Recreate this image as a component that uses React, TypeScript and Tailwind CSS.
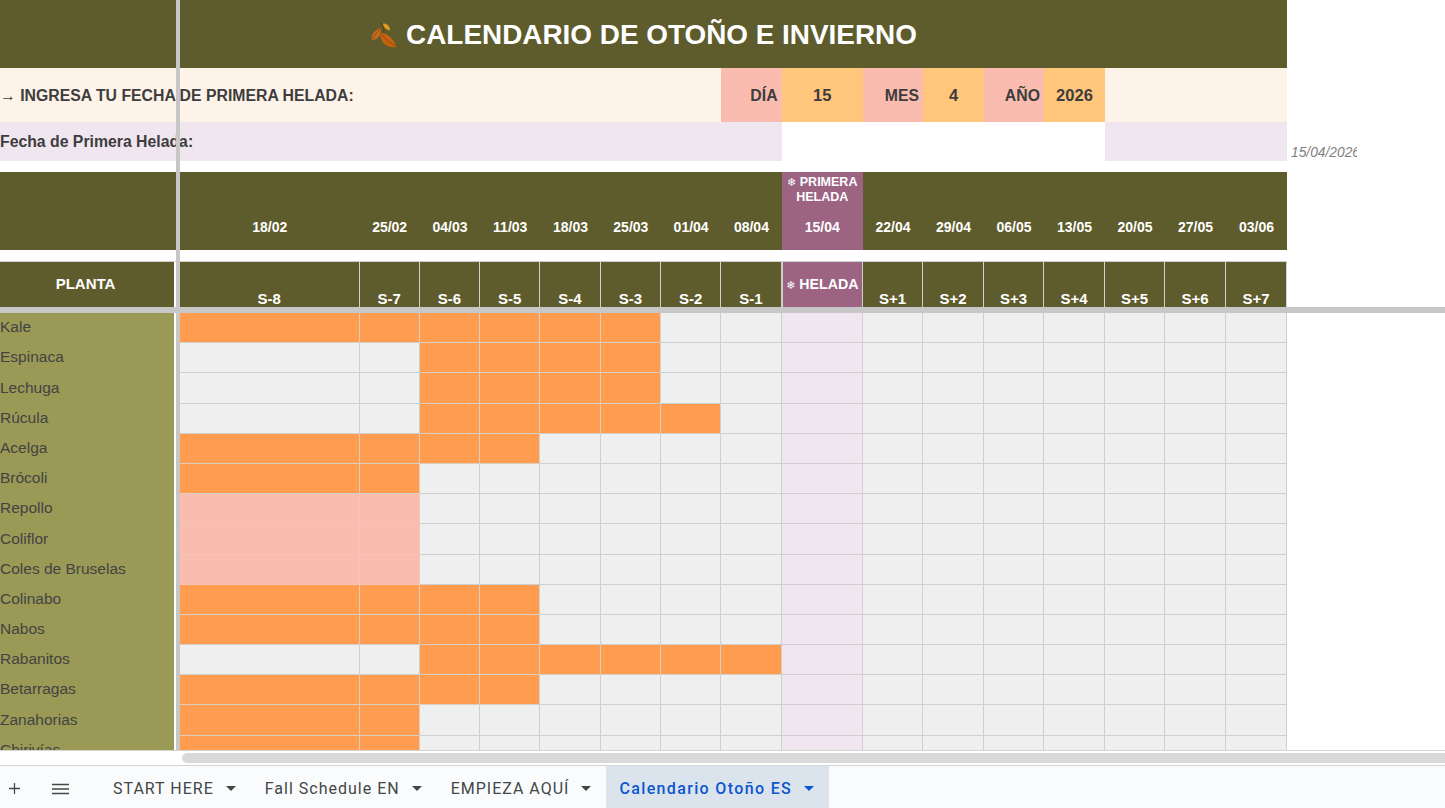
import React from 'react';
import { Plus } from 'lucide-react';

// ─── Data ────────────────────────────────────────────────

const DATES = ['18/02', '25/02', '04/03', '11/03', '18/03', '25/03', '01/04', '08/04', '15/04', '22/04', '29/04', '06/05', '13/05', '20/05', '27/05', '03/06'];
const WEEKS = ['S-8', 'S-7', 'S-6', 'S-5', 'S-4', 'S-3', 'S-2', 'S-1', '', 'S+1', 'S+2', 'S+3', 'S+4', 'S+5', 'S+6', 'S+7'];
const FROST = 8; // column of the frost week

// name, first and last painted week, colour
const PLANTS: { name: string; from: number; to: number; pink?: boolean }[] = [
  { name: 'Kale', from: 0, to: 5 },
  { name: 'Espinaca', from: 2, to: 5 },
  { name: 'Lechuga', from: 2, to: 5 },
  { name: 'Rúcula', from: 2, to: 6 },
  { name: 'Acelga', from: 0, to: 3 },
  { name: 'Brócoli', from: 0, to: 1 },
  { name: 'Repollo', from: 0, to: 1, pink: true },
  { name: 'Coliflor', from: 0, to: 1, pink: true },
  { name: 'Coles de Bruselas', from: 0, to: 1, pink: true },
  { name: 'Colinabo', from: 0, to: 3 },
  { name: 'Nabos', from: 0, to: 3 },
  { name: 'Rabanitos', from: 2, to: 7 },
  { name: 'Betarragas', from: 0, to: 3 },
  { name: 'Zanahorias', from: 0, to: 1 },
  { name: 'Chirivías', from: 0, to: 1 },
];

const TABS = [
  { label: 'START HERE' },
  { label: 'Fall Schedule EN' },
  { label: 'EMPIEZA AQUÍ' },
  { label: 'Calendario Otoño ES', active: true },
];

// Shared column widths: frozen column, 16 weeks, free space
const COLS = 'grid grid-cols-[180px_179.5px_60.3px_60.3px_60.3px_60.3px_60.3px_60.3px_60.3px_81.4px_60px_61px_60px_61px_60px_61px_61px_1fr]';

// ─── Small drawings ──────────────────────────────────────

const Leaves = () => (
  <svg viewBox="0 0 28 28" className="w-[28px] h-[28px] shrink-0">
    <path d="M11 1.5 C13 4 14 8 14 12" fill="none" stroke="#5c3a12" strokeWidth="0.8" />
    <path d="M13 2.5 C17 2.5 20 5 20 9.5 C16 9 13.5 6.5 13 2.5 Z" fill="#e39a1e" />
    <path d="M10.5 7 C5.5 8.5 1.5 13 1.7 18.5 C3 19.5 6 18.8 8 16.5 C10.5 14 11.5 10.5 10.5 7 Z" fill="#c9671a" />
    <path d="M10.7 11.7 C17 12 24 18 26.7 26 C22 26.8 16.5 25.5 13.5 22 C11 19 10 15 10.7 11.7 Z" fill="#c4620f" />
    <path d="M11.5 13 C15 18 20 22 26 25.5" fill="none" stroke="#7a3a0a" strokeWidth="0.7" />
    <path d="M2.5 18 C4.5 14 7.5 11 10 8" fill="none" stroke="#7a3a0a" strokeWidth="0.6" />
  </svg>
);

const Caret = ({ active }: { active?: boolean }) => (
  <svg viewBox="0 0 10 5" className={`w-[10px] h-[5px] ${active ? 'fill-[#0b57d0]' : 'fill-[#444746]'}`}>
    <path d="M0 0 L10 0 L5 5 Z" />
  </svg>
);

const Snow = () => <span className="font-['DejaVu_Sans',sans-serif] font-normal text-[11px]">❄</span>;

// ─── Sheet rows ──────────────────────────────────────────

const GridRow = ({ plant }: { plant: (typeof PLANTS)[number] }) => (
  <div className={`${COLS} h-[30.2px]`}>
    <div className="w-[174px] bg-[#9a9a56] flex items-end pb-[7px] text-[15.5px] leading-[18px] text-[#434343] whitespace-nowrap overflow-hidden">
      {plant.name}
    </div>
    {DATES.map((_, i) => {
      const on = i >= plant.from && i <= plant.to;
      const bg = on ? (plant.pink ? 'bg-[#fbbcb0] border-[#f4c4b8]' : 'bg-[#ff9c50] border-[#d9cfc4]') : i === FROST ? 'bg-[#f0e6ef] border-[#d2cdd1]' : 'bg-[#efefef] border-[#cfcfcf]';
      return <div key={i} className={`border-r border-b ${bg}`} />;
    })}
  </div>
);

// ─── Page ────────────────────────────────────────────────

export default function App() {
  return (
    <div className="w-[1445px] h-[808px] overflow-hidden flex flex-col bg-white font-['Liberation_Sans',Arial,sans-serif]">
      <div className="relative h-[750px] overflow-hidden shrink-0">

        {/* Title */}
        <div className="w-[1287px] h-[68px] pt-[1px] bg-[#5e5c2c] flex items-center justify-center gap-[8px] text-white text-[27.9px] font-bold whitespace-nowrap">
          <Leaves />
          <span>CALENDARIO DE OTOÑO E INVIERNO</span>
        </div>

        {/* Frost date input */}
        <div className={`${COLS} h-[54px] text-[15.8px] font-bold text-[#3d3d3d]`}>
          <div className="col-span-8 bg-[#fdf3e9] flex items-center whitespace-nowrap">→ INGRESA TU FECHA DE PRIMERA HELADA:</div>
          <div className="bg-[#fbbcb0] flex items-center justify-end pr-[4px]">DÍA</div>
          <div className="bg-[#ffc67c] flex items-center justify-center h-[55px] text-[16.5px]">15</div>
          <div className="bg-[#fbbcb0] flex items-center justify-end pr-[4px] h-[55px]">MES</div>
          <div className="bg-[#ffc67c] flex items-center justify-center h-[55px] text-[16.5px]">4</div>
          <div className="bg-[#fbbcb0] flex items-center justify-end pr-[4px] h-[55px]">AÑO</div>
          <div className="bg-[#ffc67c] flex items-center justify-center h-[55px] text-[16.5px]">2026</div>
          <div className="col-span-3 bg-[#fdf3e9]" />
        </div>

        <div className={`${COLS} h-[39px] text-[15.8px] font-bold text-[#3d3d3d]`}>
          <div className="col-span-9 bg-[#f0e6ef] flex items-center pt-[1px] whitespace-nowrap">Fecha de Primera Helada:</div>
          <div className="col-span-5 bg-white" />
          <div className="col-span-3 bg-[#f0e6ef]" />
          <div className="w-[70px] overflow-hidden whitespace-nowrap pl-[4px] pt-[21px] text-[13.8px] font-normal italic text-[#7f7f7f]">15/04/2026</div>
        </div>

        <div className="h-[11px]" />

        {/* Dates */}
        <div className={`${COLS} h-[78px] text-[14px] font-bold text-white`}>
          <div className="bg-[#5e5c2c]" />
          {DATES.map((d, i) => (
            <div key={d} className={`flex flex-col justify-end items-center pb-[15px] leading-[15px] text-center ${i === FROST ? 'bg-[#9c6383]' : 'bg-[#5e5c2c]'}`}>
              {i === FROST && (
                <>
                  <span className="text-[12.5px] whitespace-nowrap"><Snow /> PRIMERA</span>
                  <span className="text-[12.5px]">HELADA</span>
                  <span>&nbsp;</span>
                </>
              )}
              <span>{d}</span>
            </div>
          ))}
        </div>

        <div className="h-[11px]" />

        {/* Weeks */}
        <div className={`${COLS} h-[46px] text-[15px] font-bold text-white border-t border-[#cfcfcf] w-[1287px]`}>
          <div className="w-[174px] pr-[3px] bg-[#5e5c2c] flex items-center justify-center">PLANTA</div>
          {WEEKS.map((w, i) => (
            <div key={i} className={`flex justify-center border-r border-[#cfcfcf] ${i === FROST ? 'bg-[#9c6383] items-center whitespace-nowrap text-[14.2px] border-l' : 'bg-[#5e5c2c] items-end pb-[1px] leading-[15px]'}`}>
              {i === FROST ? <span><Snow /> HELADA</span> : w}
            </div>
          ))}
        </div>

        {/* Frozen rows divider */}
        <div className="h-[6px] bg-[#c7c7c7]" />

        {/* Plants */}
        {PLANTS.map(p => <GridRow key={p.name} plant={p} />)}

        {/* Frozen column divider lies over the text of the merged cells */}
        <div className="absolute left-[176px] top-0 w-[4px] h-full bg-[#c7c7c7]" />
      </div>

      {/* Horizontal scrollbar */}
      <div className="h-[16px] shrink-0 border-t border-b border-[#d4d4d4] pl-[182px] flex items-center">
        <div className="h-[10px] flex-1 rounded-l-full bg-[#d9d9d9]" />
      </div>

      {/* Sheet tabs */}
      <div className="flex-1 bg-[#f9fbfd] flex items-stretch text-[16px] tracking-[1px] font-['Roboto',sans-serif] text-[#444746]">
        <div className="w-[99px] flex items-center pt-[3px]">
          <Plus size={17} strokeWidth={1.8} className="ml-[6px]" />
          <svg viewBox="0 0 17 12" className="w-[17px] h-[12px] ml-[29px] stroke-[#444746]" strokeWidth="1.3">
            <path d="M0 1.5 H17 M0 6 H17 M0 10.5 H17" />
          </svg>
        </div>
        {TABS.map(t => (
          <div key={t.label} className={`flex items-center gap-[12px] pt-[3px] whitespace-nowrap ${t.active ? 'pl-[13px] pr-[15px] bg-[#dbe3ec] text-[#0b57d0] font-medium tracking-[1.35px]' : 'pl-[14px] pr-[15px]'}`}>
            {t.label}
            <Caret active={t.active} />
          </div>
        ))}
      </div>
    </div>
  );
}
